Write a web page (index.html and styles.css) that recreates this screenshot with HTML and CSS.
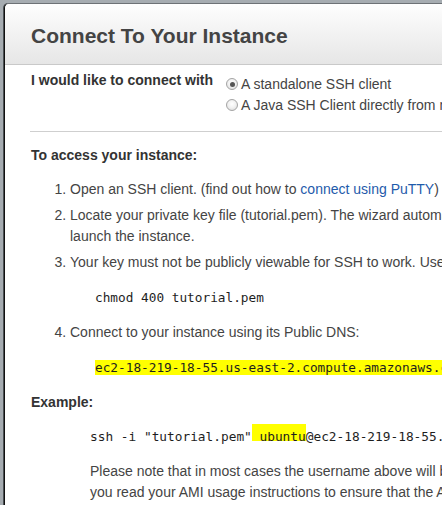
FILE: index.html
```html
<!DOCTYPE html>
<html>
<head>
<meta charset="utf-8">
<link rel="stylesheet" href="styles.css">
</head>
<body>
<div class="modal">
  <div class="modal-header">
    <h1 class="title">Connect To Your Instance</h1>
  </div>
  <div class="modal-body">
    <div class="connect-row">
      <div class="connect-label">I would like to connect with</div>
      <div class="options">
        <div class="option"><span class="radio checked"></span>A standalone SSH client</div>
        <div class="option"><span class="radio"></span>A Java SSH Client directly from my browser (Java required)</div>
      </div>
    </div>
    <hr class="divider">
    <div class="section-title">To access your instance:</div>
    <ol class="steps">
      <li>Open an SSH client. (find out how to <a class="link" href="#">connect using PuTTY</a>)</li>
      <li>Locate your private key file (tutorial.pem). The wizard automatically detects the key you used to launch the instance.</li>
      <li>Your key must not be publicly viewable for SSH to work. Use this command if needed:
        <div class="code">chmod 400 tutorial.pem</div>
      </li>
      <li>Connect to your instance using its Public DNS:
        <div class="code"><span class="hl">ec2-18-219-18-55.us-east-2.compute.amazonaws.com</span></div>
      </li>
    </ol>
    <div class="section-title example-title">Example:</div>
    <div class="example">
      <div class="code-line">ssh -i "tutorial.pem"<span class="hl-shift"> ubuntu</span>@ec2-18-219-18-55.us-east-2.compute.amazonaws.com</div>
      <p class="note">Please note that in most cases the username above will be correct, however please ensure that you read your AMI usage instructions to ensure that the AMI owner has not changed the default AMI username.</p>
    </div>
  </div>
</div>
</body>
</html>
```

FILE: styles.css
```css
html, body {
  margin: 0;
  padding: 0;
  overflow: hidden;
}
body {
  width: 442px;
  height: 505px;
  background: #a6acb1;
  font-family: "Liberation Sans", Arial, sans-serif;
  font-size: 14px;
  color: #444;
}
.modal {
  margin: 3px 0 0 4px;
  width: 760px;
  height: 560px;
  background: #fff;
  border-left: 1px solid #111;
  border-top: 1px solid #6d7276;
  border-radius: 5px 0 0 0;
  box-shadow: -1px 0 0 #4a4f53;
}
.modal-header {
  height: 60px;
  border-bottom: 1px solid #c9c9c9;
  border-radius: 5px 0 0 0;
  background: linear-gradient(#fefefe, #e6e6e6);
  display: flex;
  align-items: center;
  padding-left: 26px;
}
.title {
  margin: 0;
  font-size: 21px;
  font-weight: bold;
  color: #444;
  padding-top: 4px;
}
.modal-body {
  padding: 9px 0 0 26px;
}
.connect-row {
  display: flex;
  line-height: 21px;
}
.connect-label {
  width: 195px;
  font-weight: bold;
  color: #333;
  margin-top: -4px;
}
.option {
  display: flex;
  align-items: center;
  white-space: nowrap;
}
.radio {
  width: 10px;
  height: 10px;
  border: 1px solid #a4a4a4;
  border-radius: 50%;
  background: radial-gradient(circle at 50% 40%, #ffffff 0, #f2f2f2 45%, #d6d6d6 100%);
  margin-right: 3px;
  margin-top: -1px;
  position: relative;
  flex: none;
}
.radio.checked::after {
  content: "";
  position: absolute;
  left: 2.5px;
  top: 2.5px;
  width: 5px;
  height: 5px;
  border-radius: 50%;
  background: #555;
}
.divider {
  margin: 15px 0 0 -1px;
  border: 0;
  border-top: 1px solid #cfcfcf;
  height: 0;
}
.section-title {
  margin-top: 13px;
  font-weight: bold;
  color: #333;
  line-height: 21px;
}
.steps {
  margin: 13px 0 0 0;
  padding-left: 39px;
  line-height: 21px;
  width: 610px;
}
.steps li {
  margin-bottom: 5px;
}
.link {
  color: #1f5bab;
  text-decoration: none;
}
.code {
  font-family: "DejaVu Sans Mono", "Liberation Mono", monospace;
  font-size: 12.75px;
  color: #1e1e1e;
  white-space: nowrap;
  margin: 14px 0 14px 25px;
  line-height: 21px;
}
.hl {
  background: #ffff00;
}
.example-title {
  margin-top: 14px;
}
.example {
  padding-left: 59px;
  padding-top: 13px;
  width: 604px;
}
.code-line {
  font-family: "DejaVu Sans Mono", "Liberation Mono", monospace;
  font-size: 12.8px;
  color: #1e1e1e;
  white-space: nowrap;
  line-height: 21px;
}
.hl-shift {
  padding-top: 5px;
  background: linear-gradient(#ffff00, #ffff00) left top / 100% 17px no-repeat;
}
.note {
  margin: 14px 0 0 0;
  line-height: 21px;
}
```
